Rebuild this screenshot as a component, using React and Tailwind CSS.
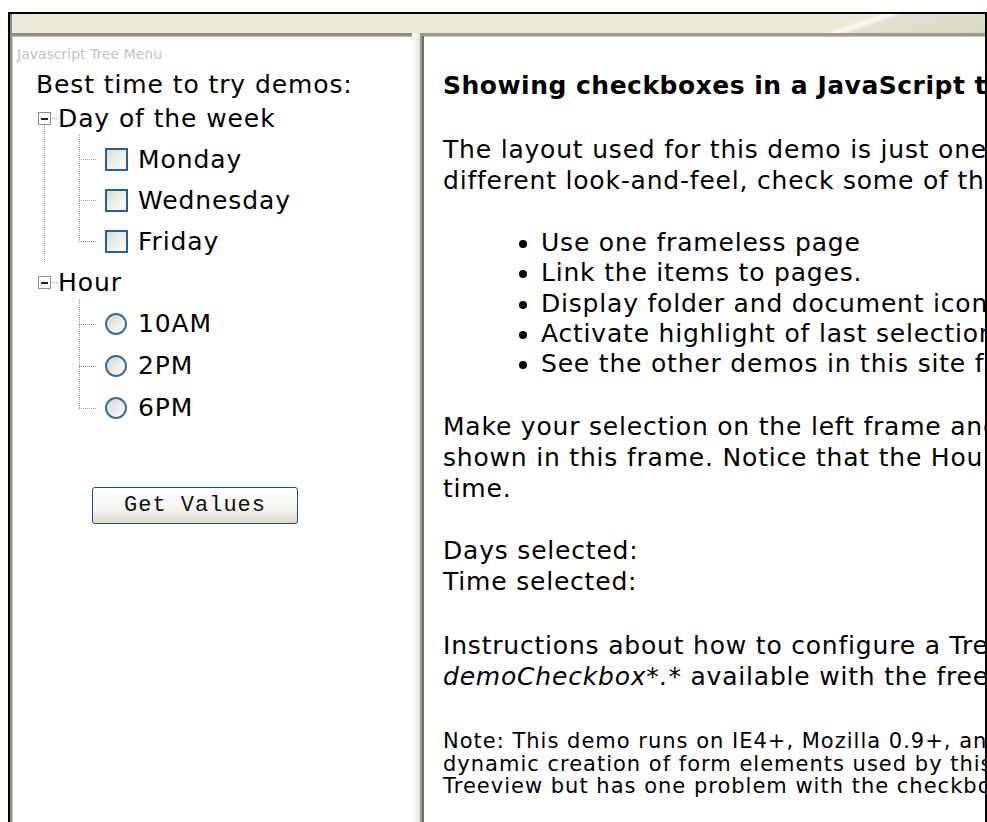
import React from 'react';

const days = ['Monday', 'Wednesday', 'Friday'];
const hours = ['10AM', '2PM', '6PM'];

const MinusBox = () => (
  <span className="flex h-[13px] w-[13px] shrink-0 items-center justify-center border border-[#8c8c8c] bg-white">
    <span className="block h-[2px] w-[7px] bg-[#222]" />
  </span>
);

const Checkbox = () => (
  <span className="block h-[23px] w-[23px] border-2 border-[#2b5f91] bg-[linear-gradient(135deg,#dcdcd6,#ffffff)]" />
);

const Radio = () => (
  <span className="block h-[22px] w-[22px] rounded-full border-2 border-[#3a6d9c] bg-[linear-gradient(135deg,#d6d6d0,#ffffff)]" />
);

const Folder = ({ label, items, kind, last, rowH }) => (
  <div className="relative">
    {/* dotted trunk running down to the next sibling */}
    {!last && (
      <span className="absolute left-[32px] top-[27px] bottom-0 border-l border-dotted border-[#9a9a9a]" />
    )}
    <div className="flex h-[41px] items-center pl-[26px]">
      <MinusBox />
      <span className="ml-px w-[5px] border-t border-dotted border-[#9a9a9a]" />
      <span className="ml-[1px]">{label}</span>
    </div>
    <div className="relative">
      <span
        className="absolute left-[67px] top-[-4px] border-l border-dotted border-[#9a9a9a]"
        style={{ height: rowH * (items.length - 1) + rowH / 2 + 4 }}
      />
      {items.map((it) => (
        <div key={it} className="flex items-center" style={{ height: rowH }}>
          <span className="ml-[67px] w-[17px] border-t border-dotted border-[#9a9a9a]" />
          <span className="ml-[9px] shrink-0">{kind === 'check' ? <Checkbox /> : <Radio />}</span>
          <span className={kind === 'check' ? 'ml-[10px]' : 'ml-[11px]'}>{it}</span>
        </div>
      ))}
    </div>
  </div>
);

export default function App() {
  return (
    <div className="h-[822px] overflow-hidden bg-white pl-2 pt-3 font-['DejaVu_Sans',sans-serif] text-black">
      <div className="flex h-[810px] w-[979px] flex-col border-l-2 border-r-2 border-t-2 border-black bg-[#ece9d8]">
        {/* window strip above the frames */}
        <div className="h-[19px] shrink-0 border-l-2 border-[#8a897f] bg-[linear-gradient(161deg,#ece9d8_0%,#ece9d8_84%,#fbfaf3_85.5%,#e2e1ce_87%,#d9d9c3_100%)]" />

        <div className="flex min-h-0 flex-1">
          {/* left frame: tree menu */}
          <div className="w-[402px] shrink-0 border-l-2 border-t-[3px] border-[#8f8e84] bg-white shadow-[inset_1px_1px_0_#c8c5b5]">
            <div className="pl-[5px] pt-[9px] text-[14px] leading-[18px] text-[#c2c0c8]">Javascript Tree Menu</div>
            <div className="mt-[9px] pl-[24px] text-[25px] leading-[26px] tracking-[0.9px]">
              <div>Best time to try demos:</div>
            </div>
            <div className="text-[25px] tracking-[0.9px]">
              <Folder label="Day of the week" items={days} kind="check" rowH={41} />
              <Folder label="Hour" items={hours} kind="radio" rowH={42} last />
            </div>
            <div className="mt-[58px] pl-[80px]">
              <button className="h-[37px] w-[206px] rounded-[3px] border border-[#1f4f80] bg-[linear-gradient(180deg,#ffffff_0%,#f4f3ee_60%,#dedbcf_100%)] font-['Liberation_Mono',monospace] text-[22px] leading-none tracking-[1px] text-[#111]">
                Get Values
              </button>
            </div>
          </div>

          {/* splitter */}
          <div className="w-[8px] shrink-0 bg-[linear-gradient(90deg,#fcfcf8_0%,#f6f5ee_50%,#e4e1d0_100%)]" />

          {/* right frame: page content */}
          <div className="min-w-0 flex-1 overflow-hidden border-l-2 border-t-[3px] border-[#9c9a8c] bg-white shadow-[inset_2px_0_0_#6f6d62,inset_0_1px_0_#c8c5b5]">
            <div className="whitespace-nowrap pl-[21px] text-[25px] leading-[31px] tracking-[0.8px]">
              <div className="mt-[34px] font-bold tracking-[0.5px]">Showing checkboxes in a JavaScript tree</div>

              <div className="mt-[33px]">
                <div>The layout used for this demo is just one of many. For a</div>
                <div>different look-and-feel, check some of the options below:</div>
              </div>

              <ul className="mt-[32px] list-disc pl-[98px] leading-[30.25px]">
                <li>Use one frameless page</li>
                <li>Link the items to pages.</li>
                <li>Display folder and document icons.</li>
                <li>Activate highlight of last selection.</li>
                <li>See the other demos in this site for more options.</li>
              </ul>

              <div className="mt-[32px]">
                <div>Make your selection on the left frame and click the button. The values are</div>
                <div>shown in this frame. Notice that the Hour options allow only one</div>
                <div>time.</div>
              </div>

              <div className="mt-[31px]">
                <div>Days selected:</div>
                <div>Time selected:</div>
              </div>

              <div className="mt-[33px]">
                <div>Instructions about how to configure a Treeview with form elements are in</div>
                <div>
                  <i>demoCheckbox*.*</i> available with the free distribution.
                </div>
              </div>

              <div className="mt-[38px] text-[21px] leading-[22.5px] tracking-[1px]">
                <div>Note: This demo runs on IE4+, Mozilla 0.9+, and Netscape 6+. Netscape 4 lacks the</div>
                <div>dynamic creation of form elements used by this demo. Opera 7 shows the</div>
                <div>Treeview but has one problem with the checkboxes.</div>
              </div>
            </div>
          </div>
        </div>
      </div>
    </div>
  );
}
